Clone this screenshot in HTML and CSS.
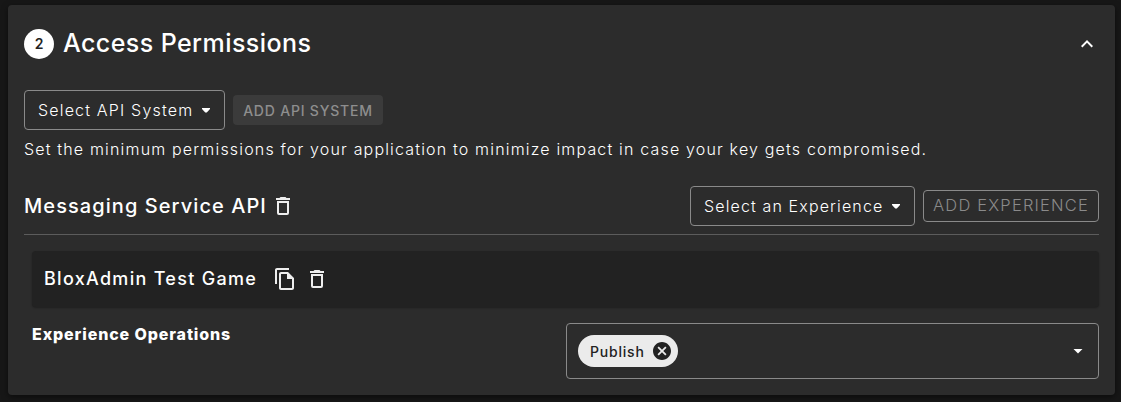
FILE: index.html
```html
<!DOCTYPE html>
<html lang="en">
<head>
<meta charset="utf-8">
<title>Access Permissions</title>
<link rel="stylesheet" href="styles.css">
</head>
<body>
<main class="card">
  <header class="card-header">
    <span class="step">2</span>
    <h1 class="title">Access Permissions</h1>
    <svg class="collapse" viewBox="0 0 24 24"><path d="M12 8l-6 6 1.410 1.410L12 10.830l4.590 4.580L18 14z"/></svg>
  </header>
  <div class="system-row">
    <button class="select select-system">Select API System<i class="caret"></i></button>
    <button class="add-system">ADD API SYSTEM</button>
  </div>
  <p class="hint">Set the minimum permissions for your application to minimize impact in case your key gets compromised.</p>
  <section class="api-row">
    <h2 class="api-name">Messaging Service API</h2>
    <svg class="trash" viewBox="0 0 14 18"><path fill-rule="evenodd" d="M4.500 0h5l1 1H14v2H0V1h3.500zM1 4h12v12a2 2 0 0 1-2 2H3a2 2 0 0 1-2-2zM3 6v10h8V6z"/></svg>
    <button class="select select-experience">Select an Experience<i class="caret"></i></button>
    <button class="add-experience">ADD EXPERIENCE</button>
  </section>
  <section class="game">
    <h3 class="game-name">BloxAdmin Test Game</h3>
    <svg class="copy" viewBox="0 0 24 24"><path d="M16 1H4c-1.100 0-2 .9-2 2v14h2V3h12V1zm-1 4H8c-1.100 0-1.990.9-1.990 2L6 21c0 1.100.89 2 1.990 2H19c1.100 0 2-.9 2-2V11l-6-6zM8 21V7h6v5h5v9H8z"/></svg>
    <svg class="trash" viewBox="0 0 14 18"><path fill-rule="evenodd" d="M4.500 0h5l1 1H14v2H0V1h3.500zM1 4h12v12a2 2 0 0 1-2 2H3a2 2 0 0 1-2-2zM3 6v10h8V6z"/></svg>
  </section>
  <section class="operations">
    <h4 class="operations-label">Experience Operations</h4>
    <div class="operations-select">
      <span class="chip">Publish<svg class="remove" viewBox="2 2 20 20"><path d="M12 2C6.470 2 2 6.470 2 12s4.470 10 10 10 10-4.470 10-10S17.530 2 12 2zm5 13.590L15.590 17 12 13.410 8.410 17 7 15.590 10.590 12 7 8.410 8.410 7 12 10.590 15.590 7 17 8.410 13.410 12 17 15.590z"/></svg></span>
      <i class="caret caret-wide"></i>
    </div>
  </section>
</main>
</body>
</html>
```
FILE: styles.css
```css
* { box-sizing: border-box; }
body {
  margin: 0;
  padding: 5px 6px 7px 8px;
  height: 402px;
  background: #171717;
  color: #fff;
  font-family: Inter, "Open Sans", sans-serif;
}
.card {
  height: 390px;
  padding: 22px 16px 16px;
  background: #2c2c2c;
  border-radius: 4px;
  box-shadow: 0 2px 6px rgba(0, 0, 0, .5);
}
h1, h2, h3, h4, p { margin: 0; white-space: nowrap; }
button {
  margin: 0;
  padding: 0;
  background: none;
  color: inherit;
  font-family: inherit;
  white-space: nowrap;
}
svg { display: block; flex: none; fill: #fff; }
.card-header { display: flex; align-items: center; height: 34px; }
.step {
  width: 30px;
  height: 30px;
  margin-right: 9px;
  border-radius: 50%;
  background: #fff;
  color: #222;
  font-size: 14px;
  font-weight: 600;
  line-height: 30px;
  text-align: center;
}
.title { padding-bottom: 2px; font-size: 25px; font-weight: 500; line-height: 32px; letter-spacing: .43px; }
.collapse { width: 24px; height: 24px; margin-left: auto; }
.system-row { display: flex; align-items: center; gap: 8px; margin-top: 29px; }
.select {
  display: flex;
  align-items: center;
  justify-content: space-between;
  height: 40px;
  padding: 0 14px 0 13px;
  border: 1px solid #8a8a8a;
  border-radius: 4px;
  font-size: 16px;
  font-weight: 300;
  letter-spacing: 1.18px;
}
.select-system { width: 201px; }
.select-experience { width: 225px; margin-left: auto; letter-spacing: 1.13px; }
.caret {
  width: 8px;
  height: 5px;
  background: #fff;
  clip-path: polygon(0 0, 100% 0, 100% 30%, 60% 100%, 40% 100%, 0 30%);
}
.add-system {
  width: 150px;
  height: 30px;
  border: 0;
  border-radius: 4px;
  background: #3b3b3b;
  color: #8e8e8e;
  font-size: 14px;
  font-weight: 500;
  letter-spacing: .8px;
}
.hint {
  height: 24px;
  margin-top: 7px;
  font-size: 16px;
  font-weight: 300;
  line-height: 24px;
  letter-spacing: 1.17px;
}
.api-row {
  display: flex;
  align-items: center;
  height: 49px;
  margin-top: 25px;
  padding-bottom: 8px;
  border-bottom: 1px solid #5c5c5c;
}
.api-name { font-size: 20px; font-weight: 500; letter-spacing: 1.07px; margin-right: 9px; }
.trash { width: 14px; height: 18px; fill: #eee; }
.add-experience {
  width: 176px;
  height: 32px;
  margin-left: 8px;
  padding-bottom: 2px;
  border: 1px solid #8a8a8a;
  border-radius: 4px;
  color: #8a8a8a;
  font-size: 16.5px;
  font-weight: 300;
  letter-spacing: 1.18px;
}
.game {
  display: flex;
  align-items: center;
  height: 56px;
  margin: 16px 0 0 8px;
  padding-left: 12px;
  border-radius: 4px;
  background: #222;
  box-shadow: 0 1px 2px rgba(0, 0, 0, .3);
}
.game-name { padding-bottom: 2px; font-size: 18px; font-weight: 500; letter-spacing: 1.29px; }
.copy { width: 24px; height: 24px; margin: 0 13px 0 16px; fill: #eee; }
.operations { display: flex; justify-content: space-between; margin: 16px 0 0 8px; }
.operations-label { font-size: 16px; font-weight: 800; line-height: 22px; letter-spacing: .88px; }
.operations-select {
  display: flex;
  align-items: center;
  justify-content: space-between;
  width: 533px;
  height: 56px;
  padding: 0 15px 0 11px;
  border: 1px solid #8a8a8a;
  border-radius: 4px;
}
.chip {
  display: flex;
  align-items: center;
  justify-content: space-between;
  width: 100px;
  height: 32px;
  padding: 0 7px 0 12px;
  border-radius: 16px;
  background: #ebebeb;
  color: #222;
  font-size: 14px;
  font-weight: 500;
  letter-spacing: .8px;
}
.remove { width: 18px; height: 18px; fill: #222; }
.caret-wide { width: 10px; clip-path: polygon(0 0, 100% 0, 50% 100%); }
```
